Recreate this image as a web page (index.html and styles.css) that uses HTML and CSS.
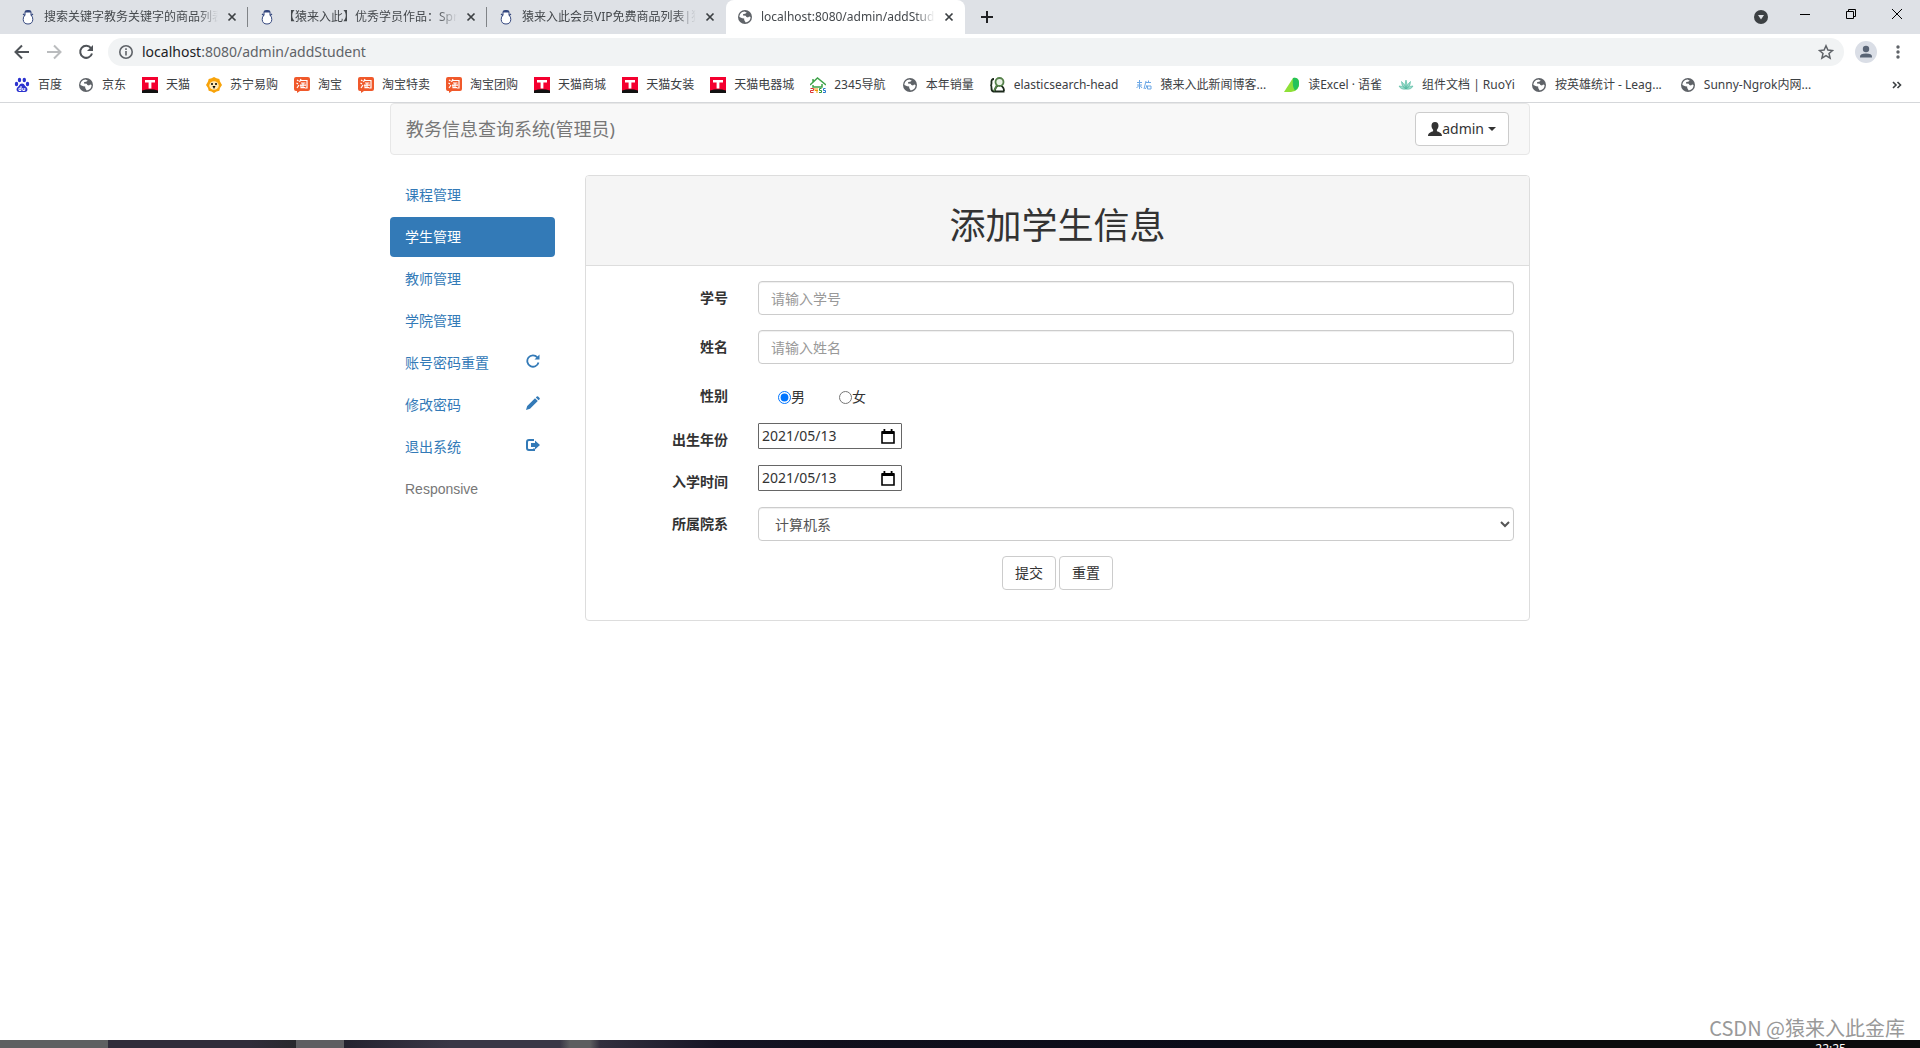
FILE: index.html
```html
<!DOCTYPE html>
<html lang="zh-CN">
<head>
<meta charset="utf-8">
<title>localhost:8080/admin/addStudent</title>
<link rel="stylesheet" href="styles.css">
</head>
<body>
<svg class="sprite" aria-hidden="true">
  <symbol id="globe" viewBox="0 0 16 16"><circle cx="8" cy="8" r="7" fill="#5f6368"/><path d="M7.600 2.500C4.500 2.600 2.400 5 2.400 8l2.800 1.200 2 .2v1.700l1.500 2.400c3-.4 4.900-2.700 4.900-5.500l-1.500-.6-1.100 1-1.600-.3-.7-1.300-2.700-.4.200-1.300 1.900-.4 1.700-1z" fill="#fff"/><path d="M9 5.200l1.800-1.300 1.400 1.600L10.500 7 9 6.500z" fill="#5f6368"/></symbol>
  <symbol id="ape" viewBox="0 0 16 16"><path d="M5 2.500Q8 .5 11 2.500v3.500q2 2 1.800 4.500Q12.500 15 8 15t-4.800-4.500Q3 8 5 6z" fill="#fff" stroke="#34477e"/><path d="M5 1.800q3-1.500 6 0v1.700H5z" fill="#34477e"/><path d="M3 5l2 1.500M13 5l-2 1.500" fill="none" stroke="#34477e" stroke-width="1.200"/></symbol>
  <symbol id="cross" viewBox="0 0 10 10"><path d="M1.500 1.500l7 7m0-7l-7 7" stroke="#3c4043" stroke-width="1.700"/></symbol>
  <symbol id="tmall" viewBox="0 0 16 16"><path d="M0 0h16v16H0z" fill="#f4002f"/><path d="M0 13.500Q8 11 16 13.500V16H0z" fill="#111"/><path d="M3 3h10v2.600H9.400v6H6.600v-6H3z" fill="#fff"/></symbol>
  <symbol id="tao" viewBox="0 0 16 16"><path d="M2 0h12q2 0 2 2v10q0 2-2 2H6l-3 2v-2H2q-2 0-2-2V2q0-2 2-2z" fill="#f0592b"/><path d="M3 3l1.500 1M2.500 6l1.500 1M3 11l2-3M7 2L5.500 5M6.500 3.500h6.500v7.500h-2M7 6h4.500M6 8.200h6M9 6v4.500M7 8.500v2.200h4" fill="none" stroke="#fff" stroke-width="1.200"/></symbol>
  <symbol id="calendar" viewBox="0 0 14 15"><path d="M1 3h12v11H1z" fill="none" stroke="#000" stroke-width="1.600"/><path d="M1 2h12v3H1zM2.500 0h1.800v3H2.500zM9.700 0h1.800v3H9.700z"/></symbol>
</svg>

<header class="browser">
  <div class="tabstrip">
    <div class="tab"><svg class="icon16"><use href="#ape"/></svg><span class="tab-title">搜索关键字教务关键字的商品列表</span><button class="plain" aria-label="关闭"><svg class="icon10"><use href="#cross"/></svg></button></div>
    <div class="tab"><svg class="icon16"><use href="#ape"/></svg><span class="tab-title">【猿来入此】优秀学员作品：Spring</span><button class="plain" aria-label="关闭"><svg class="icon10"><use href="#cross"/></svg></button></div>
    <div class="tab last"><svg class="icon16"><use href="#ape"/></svg><span class="tab-title">猿来入此会员VIP免费商品列表|猿来</span><button class="plain" aria-label="关闭"><svg class="icon10"><use href="#cross"/></svg></button></div>
    <div class="tab current"><svg class="icon16"><use href="#globe"/></svg><span class="tab-title">localhost:8080/admin/addStudent</span><button class="plain" aria-label="关闭"><svg class="icon10"><use href="#cross"/></svg></button></div>
    <button class="plain new-tab" aria-label="新标签页"><svg width="12" height="12"><path d="M6 0v12M0 6h12" stroke="#202124" stroke-width="2"/></svg></button>
    <div class="window-controls">
      <button class="plain" aria-label="搜索标签页"><svg width="14" height="14"><circle cx="7" cy="7" r="7" fill="#3c4043"/><path d="M4 5h6l-3 4.500z" fill="#dee1e6"/></svg></button>
      <div class="window-buttons">
        <button class="plain" aria-label="最小化"><svg width="10" height="10"><path d="M0 5.500h10" stroke="#000"/></svg></button>
        <button class="plain" aria-label="还原"><svg width="10" height="10"><path d="M.5 2.500h7v7h-7zM2.500 2.500v-2h7v7h-2" fill="none" stroke="#000"/></svg></button>
        <button class="plain" aria-label="关闭窗口"><svg width="10" height="10"><path d="M0 0l10 10M10 0L0 10" stroke="#000"/></svg></button>
      </div>
    </div>
  </div>
  <div class="toolbar">
    <button class="plain" aria-label="后退"><svg width="16" height="16"><path d="M15 8H2M8 1.500L1.500 8 8 14.500" fill="none" stroke="#4f5358" stroke-width="2"/></svg></button>
    <button class="plain" aria-label="前进"><svg width="16" height="16"><path d="M1 8h13M8 1.500L14.500 8 8 14.500" fill="none" stroke="#babcbe" stroke-width="2"/></svg></button>
    <button class="plain" aria-label="刷新"><svg width="16" height="16"><path d="M13 4.200A6 6 0 1 0 14 9.500" fill="none" stroke="#4f5358" stroke-width="2"/><path d="M15 1v6H9z" fill="#4f5358"/></svg></button>
    <div class="omnibox">
      <svg width="16" height="16"><circle cx="8" cy="8" r="6.200" fill="none" stroke="#5f6368" stroke-width="1.600"/><path d="M8 7v4.500M8 4.300v1.700" stroke="#5f6368" stroke-width="1.600"/></svg>
      <span class="url"><b>localhost</b>:8080/admin/addStudent</span>
      <button class="plain" aria-label="收藏"><svg width="16" height="16"><path d="M8 1.800l1.900 4.300 4.600.4-3.500 3 1.100 4.600L8 11.700l-4.100 2.400L5 9.500l-3.500-3 4.600-.4z" fill="none" stroke="#5f6368" stroke-width="1.500"/></svg></button>
    </div>
    <button class="plain" aria-label="用户"><svg width="22" height="22"><circle cx="11" cy="11" r="11" fill="#dadee6"/><circle cx="11" cy="8" r="3.200" fill="#596475"/><path d="M5 16.500v-1q0-3 6-3t6 3v1z" fill="#596475"/></svg></button>
    <button class="plain" aria-label="菜单"><svg width="4" height="14"><g fill="#5f6368"><circle cx="2" cy="2" r="1.700"/><circle cx="2" cy="7" r="1.700"/><circle cx="2" cy="12" r="1.700"/></g></svg></button>
  </div>
  <nav class="bookmarks" aria-label="书签">
    <a href="#"><svg class="icon16" viewBox="0 0 16 16"><g fill="#2b32cf"><ellipse cx="2.500" cy="7" rx="1.700" ry="2.200"/><ellipse cx="5.500" cy="3" rx="1.700" ry="2.300"/><ellipse cx="10.300" cy="3" rx="1.700" ry="2.300"/><ellipse cx="13.500" cy="7" rx="1.700" ry="2.200"/><path d="M8 6.500q2 0 3.200 2.400Q14 11 13.500 13q-.7 2.500-3 2h-5q-2.300.5-3-2Q2 11 4.800 8.900 6 6.500 8 6.500z"/></g><path d="M7 9v4.500H5v-2.300h2M8.800 11v2.500h2V11" fill="none" stroke="#fff"/></svg>百度</a>
    <a href="#"><svg class="icon16"><use href="#globe"/></svg>京东</a>
    <a href="#"><svg class="icon16"><use href="#tmall"/></svg>天猫</a>
    <a href="#"><svg class="icon16" viewBox="0 0 16 16"><path d="M8 0l2.500 1.200 2.800.7.700 2.600L16 8l-2 3-.7 2.800-2.800.7L8 16l-2.500-1.500-2.800-.7L2 11 0 8l2-3.500.7-2.600 2.800-.7z" fill="#f8a30a"/><ellipse cx="8" cy="8.500" rx="4.700" ry="4.300" fill="#ffe9b5"/><circle cx="6" cy="7" r="1"/><circle cx="10" cy="7" r="1"/><path d="M6.500 9h3L8 12z"/></svg>苏宁易购</a>
    <a href="#"><svg class="icon16"><use href="#tao"/></svg>淘宝</a>
    <a href="#"><svg class="icon16"><use href="#tao"/></svg>淘宝特卖</a>
    <a href="#"><svg class="icon16"><use href="#tao"/></svg>淘宝团购</a>
    <a href="#"><svg class="icon16"><use href="#tmall"/></svg>天猫商城</a>
    <a href="#"><svg class="icon16"><use href="#tmall"/></svg>天猫女装</a>
    <a href="#"><svg class="icon16"><use href="#tmall"/></svg>天猫电器城</a>
    <a href="#"><svg class="icon16" viewBox="0 0 16 16"><path d="M0 8l7.500-7L16 8M3 2v4M3 8v2h9V7" fill="none" stroke="#3fa34a" stroke-width="1.500"/><path d="M.5 11.500h3v2h-3v2h3" fill="none" stroke="#d33"/><path d="M5 11v2.500h3M7 11v5" fill="none" stroke="#e90"/><path d="M11.500 11.500h-2v2h2v2h-2.500" fill="none" stroke="#2a9a3a"/><path d="M15.500 11.500h-2v2h2v2H13" fill="none" stroke="#27c"/></svg>2345导航</a>
    <a href="#"><svg class="icon16"><use href="#globe"/></svg>本年销量</a>
    <a href="#" class="long"><svg class="icon16" viewBox="0 0 16 16"><path d="M4 2q-3 0-2.500 4 0 2-1 2 1.200.5 1 3-.2 3 2 3.500h11M5 14q0-4 3-5M11 9q3 1 3 5" fill="none" stroke="#1c2a1c" stroke-width="1.800"/><circle cx="9.500" cy="5" r="4" fill="#e9f2e6" stroke="#55814a" stroke-width="1.800"/><path d="M7 8l-3 6" stroke="#55814a" stroke-width="1.800"/></svg>elasticsearch-head</a>
    <a href="#" class="long"><svg class="icon16" viewBox="0 0 16 16"><path d="M1 5.500h5M3.500 3v9M1 8h5M3 8.500L.5 11M4 8.500L6 11M8 12l2-8M10 5.500h5M11 8q-.5 3-2 4M11.500 9h3.500v3h-3.500zM12.500 3.500v2" fill="none" stroke="#6ea9e6"/></svg>猿来入此新闻博客...</a>
    <a href="#"><svg class="icon16" viewBox="0 0 16 16"><path d="M9 1q5-1 6 4 1 9-8 10H0z" fill="#8ee038"/><path d="M9 1q5-1 6 4 .5 6-4 8.500Q8 10 9 1z" fill="#25c25a"/></svg>读Excel · 语雀</a>
    <a href="#"><svg class="icon16" viewBox="0 0 16 16"><path d="M8 12Q6 7 8 3q2 4 0 9M8 12Q3 9 3.500 4.500 7 7 8 12q1-5 4.500-7.500Q13 9 8 12M8 12Q3 13 1 9q4-.5 7 3 3-3.500 7-3-2 4-7 3" fill="#9bdccb" stroke="#52b9a0" stroke-width=".6"/></svg>组件文档 | RuoYi</a>
    <a href="#" class="long"><svg class="icon16"><use href="#globe"/></svg>按英雄统计 - Leag...</a>
    <a href="#"><svg class="icon16"><use href="#globe"/></svg>Sunny-Ngrok内网...</a>
    <button class="plain overflow" aria-label="更多书签"><svg width="10" height="8"><path d="M1 1l3 3-3 3M5.500 1l3 3-3 3" fill="none" stroke="#3c4043" stroke-width="1.600"/></svg></button>
  </nav>
</header>

<div class="container">
  <div class="navbar">
    <a class="brand" href="#">教务信息查询系统(管理员)</a>
    <button class="btn"><svg width="14" height="14"><path d="M7 0c2.400 0 3.500 1.600 3.500 3.800 0 1.700-.8 3-1.600 3.900v1.500c1.800.8 5.100 1.500 5.100 4.800H0c0-3.300 3.300-4 5.100-4.800V7.700C4.300 6.800 3.500 5.500 3.500 3.800 3.500 1.600 4.600 0 7 0z" fill="#333"/></svg>admin<span class="caret"></span></button>
  </div>
  <div class="row">
    <nav class="sidebar">
      <a href="#">课程管理</a>
      <a href="#" class="active">学生管理</a>
      <a href="#">教师管理</a>
      <a href="#">学院管理</a>
      <a href="#">账号密码重置<svg width="14" height="14"><path d="M11.300 3.300A5.700 5.700 0 1 0 12.500 8.500" fill="none" stroke="#337ab7" stroke-width="1.800"/><path d="M13.500.5v5h-5z" fill="#337ab7"/></svg></a>
      <a href="#">修改密码<svg width="14" height="14"><path d="M0 14l1.200-4L9 2.200 11.800 5 4 12.800zM9.800 1.400l1-1q.7-.5 1.300 0l1.500 1.500q.5.700 0 1.300l-1 1z" fill="#337ab7"/></svg></a>
      <a href="#">退出系统<svg width="14" height="14"><path d="M8 2H3Q1 2 1 4v6q0 2 2 2h5v-1.500" fill="none" stroke="#337ab7" stroke-width="2"/><path d="M5 5h4V2.500L14 7l-5 4.500V9H5z" fill="#337ab7"/></svg></a>
      <span class="disabled">Responsive</span>
    </nav>
    <main class="panel">
      <div class="panel-heading"><h1>添加学生信息</h1></div>
      <form class="panel-body">
        <div class="group"><label for="sid">学号</label><input class="control" id="sid" type="text" placeholder="请输入学号"></div>
        <div class="group"><label for="sname">姓名</label><input class="control" id="sname" type="text" placeholder="请输入姓名"></div>
        <div class="group gender"><span class="label" id="sex">性别</span>
          <div class="radios" role="radiogroup" aria-labelledby="sex"><label><input type="radio" name="sex" checked>男</label><label><input type="radio" name="sex">女</label></div></div>
        <div class="group date"><label for="birth">出生年份</label><div class="datebox"><input id="birth" type="text" value="2021/05/13"><button type="button" class="plain" aria-label="选择日期"><svg width="14" height="15"><use href="#calendar"/></svg></button></div></div>
        <div class="group date"><label for="enter">入学时间</label><div class="datebox"><input id="enter" type="text" value="2021/05/13"><button type="button" class="plain" aria-label="选择日期"><svg width="14" height="15"><use href="#calendar"/></svg></button></div></div>
        <div class="group"><label for="college">所属院系</label><select class="control" id="college"><option>计算机系</option></select></div>
        <div class="actions"><button class="btn" type="submit">提交</button><button class="btn" type="reset">重置</button></div>
      </form>
    </main>
  </div>
</div>

<p class="watermark">CSDN @猿来入此金库</p>
<footer class="taskbar"><span>22:25</span></footer>
</body>
</html>
```
FILE: styles.css
```css
* { box-sizing: border-box; }

body {
  margin: 0;
  min-height: 100vh;
  display: flex;
  flex-direction: column;
  background: #fff;
  color: #333;
  font: 14px/20px "Noto Sans", "Noto Sans CJK SC", sans-serif;
}

a { color: #337ab7; text-decoration: none; }
svg { display: block; flex: none; }
button, input, select { font: inherit; color: inherit; }

.sprite { display: none; }
.icon16 { width: 16px; height: 16px; }
.icon10 { width: 10px; height: 10px; }
.plain { display: flex; padding: 0; border: 0; background: none; }

/* Browser window */
.browser { border-bottom: 1px solid #d5d7da; font-size: 12px; }

.tabstrip {
  display: flex;
  align-items: center;
  height: 34px;
  padding-left: 9px;
  background: #dee1e6;
}
.tab {
  display: flex;
  align-items: center;
  width: 239px;
  height: 20px;
  padding: 0 10px 0 11px;
  border-right: 1px solid #808387;
}
.tab.last { border-color: transparent; }
.tab.current {
  height: 34px;
  padding-right: 11px;
  border: 0;
  border-radius: 8px 8px 0 0;
  background: #fff;
}
.tab-title {
  flex: 1;
  margin: 0 9px 0 8px;
  overflow: hidden;
  white-space: nowrap;
  color: #45494d;
  -webkit-mask-image: linear-gradient(to left, transparent, #000 20px);
  mask-image: linear-gradient(to left, transparent, #000 20px);
}
.new-tab { margin-left: 16px; }
.window-controls {
  display: flex;
  align-items: center;
  gap: 32px;
  margin-left: auto;
  padding-right: 18px;
}
.window-buttons { display: flex; gap: 36px; padding-bottom: 6px; }

.toolbar {
  display: flex;
  align-items: center;
  gap: 16px;
  height: 36px;
  padding: 0 20px 0 14px;
}
.omnibox {
  display: flex;
  flex: 1;
  align-items: center;
  height: 28px;
  margin: 0 -5px 0 -2px;
  padding: 0 10px;
  border-radius: 14px;
  background: #f1f3f4;
}
.omnibox + .plain { margin-right: 3px; }
.url { flex: 1; margin-left: 8px; color: #5f6368; font-size: 14px; }
.url b { color: #202124; font-weight: normal; }

.bookmarks {
  display: flex;
  align-items: center;
  gap: 16px;
  height: 32px;
  padding: 0 18px 2px 14px;
}
.bookmarks a {
  display: flex;
  align-items: center;
  gap: 8px;
  color: #3c4043;
  white-space: nowrap;
}
.bookmarks .long { padding-right: 2px; }
.overflow { margin-left: auto; }

/* Page */
.container { width: 1170px; max-width: 100%; margin: 0 auto; padding: 0 15px; }

.navbar {
  display: flex;
  align-items: center;
  justify-content: space-between;
  min-height: 52px;
  margin-bottom: 20px;
  padding: 0 20px 0 15px;
  border: 1px solid #e7e7e7;
  border-radius: 4px;
  background: #f8f8f8;
}
.brand { color: #777; font-size: 18px; }
.btn {
  display: flex;
  align-items: center;
  padding: 6px 12px;
  border: 1px solid #ccc;
  border-radius: 4px;
  background: #fff;
}
.caret {
  margin-left: 4px;
  border: 4px solid transparent;
  border-top-color: #333;
  border-bottom: 0;
}

.row { display: flex; gap: 30px; align-items: flex-start; }

.sidebar { display: flex; flex-direction: column; gap: 2px; width: 165px; }
.sidebar a, .disabled {
  display: flex;
  align-items: center;
  justify-content: space-between;
  padding: 10px 15px;
  border-radius: 4px;
}
.sidebar .active { color: #fff; background: #337ab7; }
.sidebar svg { margin-bottom: 4px; }
.disabled { color: #777; font-family: "Liberation Sans", sans-serif; }

.panel { flex: 1; border: 1px solid #ddd; border-radius: 4px; }
.panel-heading {
  padding: 10px 15px;
  border-bottom: 1px solid #ddd;
  border-radius: 3px 3px 0 0;
  background: #f5f5f5;
  text-align: center;
}
h1 { margin: 20px 0 10px; font-size: 36px; font-weight: 400; line-height: 39px; }

.panel-body { padding: 15px; }
.group {
  display: grid;
  grid-template-columns: 142px 1fr;
  column-gap: 15px;
  align-items: start;
  margin-bottom: 15px;
}
.group > label, .group > .label {
  padding: 7px 15px 0 0;
  font-weight: 700;
  text-align: right;
}
.control {
  width: 100%;
  height: 34px;
  padding: 6px 12px;
  border: 1px solid #ccc;
  border-radius: 4px;
  background: #fff;
  color: #555;
  box-shadow: inset 0 1px 1px #0001;
}
.control::placeholder { color: #999; }
.gender { min-height: 29px; }
.radios { display: flex; gap: 34px; padding: 8px 0 0 20px; }
.radios label { display: flex; align-items: center; }
.radios input { width: 13px; height: 13px; margin: 0; }
.date { min-height: 27px; }
.datebox {
  display: flex;
  align-items: center;
  width: 144px;
  height: 26px;
  padding: 0 6px 0 3px;
  border: 1px solid #666;
  border-radius: 1px;
}
.datebox input {
  flex: 1;
  min-width: 0;
  padding: 0;
  border: 0;
  outline: 0;
}
.actions { display: flex; justify-content: center; gap: 3px; margin-bottom: 15px; }

/* Screen edge */
.watermark {
  margin: auto 15px 0 0;
  color: #999;
  font-family: "Noto Sans CJK SC", sans-serif;
  font-size: 20px;
  line-height: 24px;
  text-align: right;
}
.taskbar {
  display: flex;
  justify-content: flex-end;
  height: 8px;
  padding: 3px 74px 0 0;
  overflow: hidden;
  background: linear-gradient(to right, #5f6062 108px, #302c3a 108px 250px, #29282d 296px, #5f5e62 296px 344px, #24222f 344px, #3a3746 450px 560px, #5d5e60 570px 590px, #322f3e 600px, #161424 720px, #11101d 830px, #0b0b18 1200px, #0c0b0d 1400px);
}
.taskbar span { color: #fff; font-size: 12px; line-height: 12px; }
```
